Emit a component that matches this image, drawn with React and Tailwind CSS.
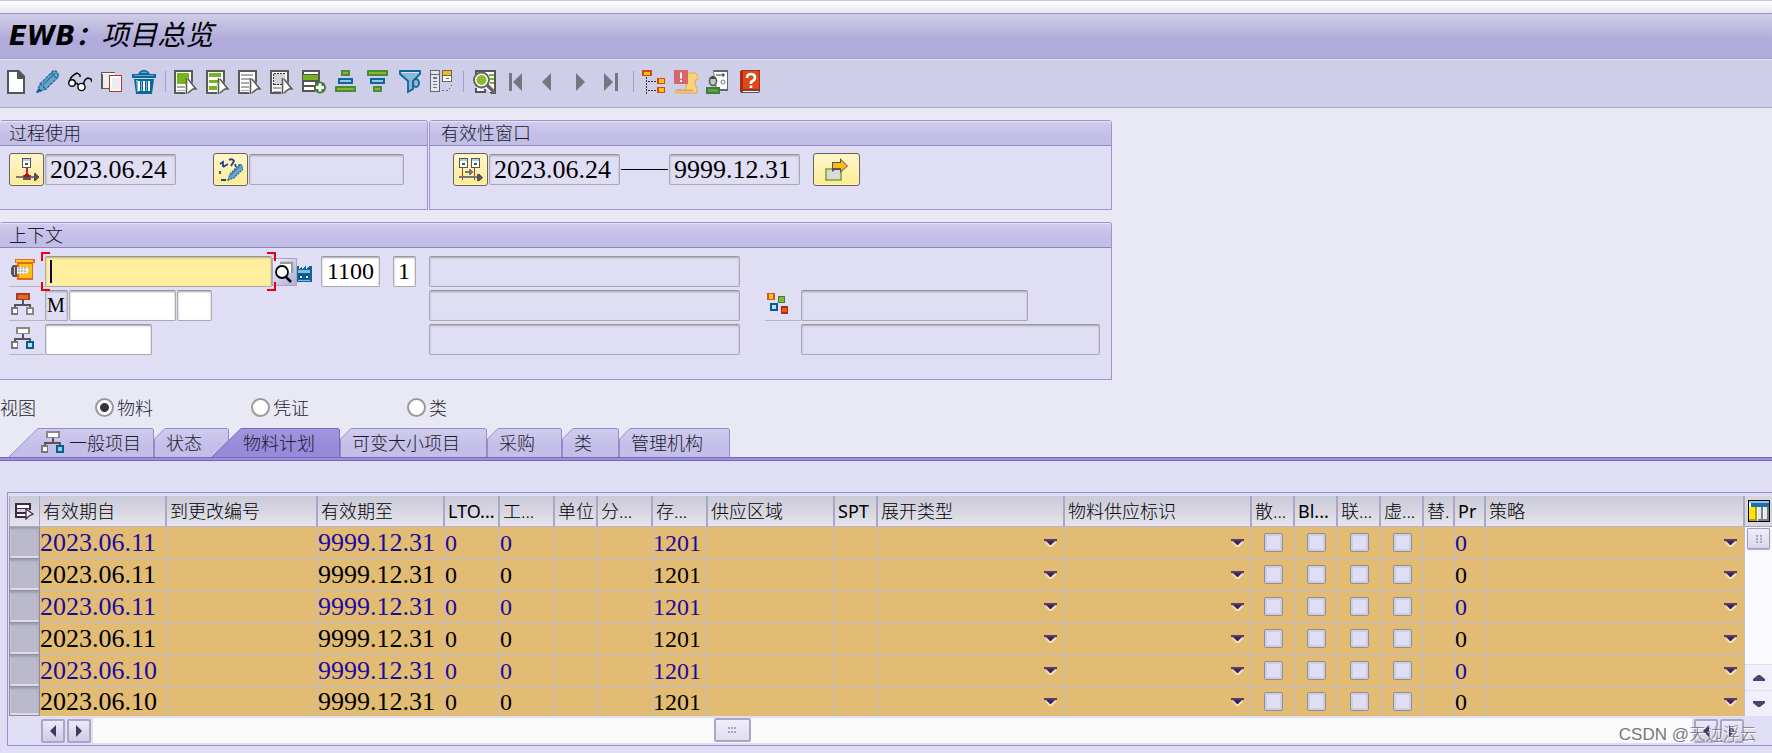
import React from "react";

const CJK = "font-['Noto_Sans','Noto_Sans_CJK_SC',sans-serif]";
const SERIF = "font-['Liberation_Serif','Noto_Sans_CJK_SC',serif]";

function Svg({ w = 24, h = 24, crisp = false, className = "", children }) {
  return (
    <svg
      width={w}
      height={h}
      viewBox={`0 0 ${w} ${h}`}
      fill="none"
      aria-hidden="true"
      shapeRendering={crisp ? "crispEdges" : undefined}
      className={`block shrink-0 ${className}`}
    >
      {children}
    </svg>
  );
}

function DocFrame({ children }) {
  return (
    <Svg>
      <g shapeRendering="crispEdges">
        <path d="M0 0h19v13H0z" fill="#5a5a5a" />
        <path d="M0 0h11v24H0z" fill="#5a5a5a" />
        <path d="M2 2h15v11h-5v9H2z" fill="#fff" />
        {children}
      </g>
      <path d="M17 11l7 9-4 1z" fill="#d9d9d9" />
      <path d="M13 8v15l4-4 5-1z" fill="#fff" />
      <path d="M12.500 8v16M14 9l8 10h-3l-5 4" stroke="#5a5a5a" strokeWidth="1.600" />
    </Svg>
  );
}

const IconNew = () => (
  <Svg>
    <path d="M3 0h12l6 6v18H3z" fill="#555" />
    <path d="M5 2h8v7h6v13H5z" fill="#fff" />
  </Svg>
);

const IconPencil = () => (
  <Svg>
    <path d="M1 23l3-9L17 1h3l3 3v3L10 19z" fill="#6ea3c8" />
    <path d="M4 14L17 1h3l2 3v3L10 19M1 22l3-8 6 5z" stroke="#156c9c" strokeWidth="1.300" strokeDasharray="3 1" />
    <path d="M7 15L19 3M15 3l5 5" stroke="#2b7dab" strokeWidth="1.500" />
    <path d="M1 23l2-5 3 3z" fill="#0b5f8e" />
  </Svg>
);

const IconGlasses = () => (
  <Svg>
    <circle cx="4" cy="13" r="3.300" fill="#fff" stroke="#000" strokeWidth="1.400" />
    <circle cx="13.500" cy="17" r="3.600" fill="#fff" stroke="#000" strokeWidth="1.400" />
    <path d="M7 14q2-2 3 1M2 10q1-4 7-7l3 2v2M16 15q-1-5 4-7l3 1 1 3" stroke="#000" strokeWidth="1.400" />
  </Svg>
);

const IconCopy = () => (
  <Svg crisp>
    <path d="M1 2h14v17H1z" fill="#5a5a5a" />
    <path d="M3 4h12v14H3z" fill="#eeeeee" />
    <path d="M2 3h13v1H2z" fill="#fff" />
    <path d="M9 5h13v17H9z" fill="#b23a22" />
    <path d="M10 6h11v15H10z" fill="#fff" />
    <path d="M12 8h8v11h-8z" fill="#ececf0" />
  </Svg>
);

const IconTrash = () => (
  <Svg>
    <path d="M2 9h20l-2 15H4z" fill="#0b6799" />
    <path d="M0 4h6q2-4 6-4t6 4h6v4H0z" fill="#0b6799" />
    <path d="M2 5h20v1H2zM8 3q4-3 8 0z" fill="#6da8cf" />
    <path d="M6 11h2v10H6zM11 11h2v10h-2zM16 11h2v10h-2z" fill="#fff" />
    <path d="M4 10h2v12H5zM9 11h1v10H9zM14 11h1v10h-1z" fill="#7db3d5" />
  </Svg>
);

const IconSelBlock = () => (
  <DocFrame>
    <path d="M3 3h12v11H3z" fill="#76b41c" />
    <path d="M3 16h8v2H3zM3 20h8v1H3z" fill="#a8a8a8" />
  </DocFrame>
);
const IconSelAll = () => (
  <DocFrame>
    <path d="M3 3h12v4H3zM3 10h9v3H3zM3 16h8v4H3z" fill="#76b41c" />
  </DocFrame>
);
const IconSelNone = () => (
  <DocFrame>
    <path d="M3 4h12v2H3zM3 8h9v2H3zM3 12h8v2H3zM3 16h8v2H3zM3 20h8v1H3z" fill="#ababab" />
  </DocFrame>
);
const IconSelDots = () => (
  <DocFrame>
    <path d="M4 4h11v11H4z" fill="#d4d4d4" />
    <path d="M4 3.500h11M3.500 4v11M4 14.500h9" stroke="#333" strokeDasharray="2 1" />
    <path d="M3 17h8v2H3zM3 21h8v1H3z" fill="#ababab" />
  </DocFrame>
);
const IconInsert = () => (
  <Svg>
    <g shapeRendering="crispEdges">
      <path d="M0 0h18v14H0zM0 14h13v8H0z" fill="#555" />
      <path d="M2 2h14v2H2zM2 12h11v3H2zM2 17h10v3H2z" fill="#fff" />
      <path d="M1 5h15v5H1z" fill="#76b41c" />
    </g>
    <circle cx="18" cy="17.500" r="6" fill="#3d7d3f" />
    <path d="M18 13.500v8M14 17.500h8" stroke="#fff" strokeWidth="3" />
  </Svg>
);
const Bar = ({ x, y, w, h = 6, c, f }) => (
  <rect x={x + 1} y={y + 1} width={w - 2} height={h - 2} fill={f} stroke={c} strokeWidth="2" />
);
const IconAsc = () => (
  <Svg>
    <Bar x={7} y={0} w={9} c="#4a8a3a" f="#84ba2a" />
    <Bar x={4} y={8} w={15} c="#0b6799" f="#9cc2de" />
    <Bar x={1} y={16} w={21} c="#4a8a3a" f="#84ba2a" />
  </Svg>
);
const IconDesc = () => (
  <Svg>
    <Bar x={1} y={0} w={21} c="#4a8a3a" f="#84ba2a" />
    <Bar x={4} y={8} w={15} c="#0b6799" f="#9cc2de" />
    <Bar x={7} y={16} w={9} c="#4a8a3a" f="#84ba2a" />
  </Svg>
);
const IconFilter = () => (
  <Svg>
    <path d="M2 1h20v3l-7 7v8l-5 3V11L2 4z" fill="#8db6d8" stroke="#0b6799" strokeWidth="1.800" />
    <path d="M3 2.500h18" stroke="#d4e4f2" />
    <ellipse cx="18" cy="13" rx="3" ry="4" stroke="#0b6799" strokeWidth="1.800" fill="#8db6d8" />
  </Svg>
);
const IconLayout = () => (
  <Svg crisp>
    <path d="M0 0h10v22H0z" fill="#666" />
    <path d="M1 1h8v3H1zM1 5h8v16H1z" fill="#e4e4f2" />
    <path d="M3 7h4v2H3zM3 11h4v1H3zM3 14h4v1H3zM3 17h4v1H3z" fill="#777" />
    <path d="M12 0h10v12H12z" fill="#666" />
    <path d="M13 1h8v4h-8z" fill="#f7b918" />
    <path d="M13 6h8v5h-8z" fill="#fff" />
    <path d="M16 8h3v1h-3z" fill="#666" />
    <path d="M12 20h2v1h-2zM16 20h2v1h-2zM19 18h1v1h-1zM21 15h1v1h-1z" fill="#666" />
  </Svg>
);
const IconFind = () => (
  <Svg>
    <path d="M3 0h21v24H3z" fill="#555" />
    <path d="M5 2h17v20H5z" fill="#fff" />
    <path d="M17 4h5v2h-5zM18 8h4v2h-4zM18 12h4v2h-4z" fill="#76b41c" />
    <path d="M0 16h7l8 3 4 5H0z" fill="#cecee8" />
    <path d="M4 18v4h9v-3" stroke="#555" strokeWidth="2" fill="#fff" />
    <circle cx="9.500" cy="10" r="7.500" fill="#fff" stroke="#666" strokeWidth="2" />
    <circle cx="9.500" cy="10" r="5" fill="#86bb30" />
    <path d="M15 15l8 8" stroke="#666" strokeWidth="3.500" />
  </Svg>
);
const IconFirst = () => (
  <Svg>
    <path d="M5 3h3v18H5zM18 3v18l-9-9z" fill="#767680" />
  </Svg>
);
const IconPrev = () => (
  <Svg>
    <path d="M15 3v18l-9-9z" fill="#767680" />
  </Svg>
);
const IconNext = () => (
  <Svg>
    <path d="M8 3v18l9-9z" fill="#767680" />
  </Svg>
);
const IconLast = () => (
  <Svg>
    <path d="M4 3v18l9-9zM15 3h3v18h-3z" fill="#767680" />
  </Svg>
);
const IconTree = () => (
  <Svg crisp>
    <path d="M0 0h10v6H0zM15 8h8v6h-8zM15 17h8v6h-8z" fill="#d2481a" />
    <path d="M2 2h6v3H2zM17 9h5v4h-5zM17 18h5v4h-5z" fill="#ffc20e" />
    <path d="M4.500 7v17" stroke="#333" strokeWidth="1" strokeDasharray="2 1" />
    <path d="M6 11.500h9M6 20.500h9" stroke="#333" strokeWidth="1" strokeDasharray="2 1" />
  </Svg>
);
const IconScroll = () => (
  <Svg>
    <path d="M12 3h10l2 3v3h-2l-1 5 2 5v4H2q-2-2 0-3h10z" fill="#f7d479" stroke="#e8a35a" />
    <path d="M3 20.500h16" stroke="#e59a68" strokeWidth="1.500" />
    <path d="M0 0h14v14H0z" fill="#d9666a" />
    <path d="M7 2.500v6M7 10v2" stroke="#fff" strokeWidth="2" />
  </Svg>
);
const IconUserDoc = () => (
  <Svg>
    <path d="M7 0h15v21H10z" fill="#666" />
    <path d="M8 2h13v17H11z" fill="#fff" />
    <path d="M10 5h5" stroke="#777" strokeWidth="1.500" />
    <path d="M15 5l2-2 2 2-2 2z" fill="#555" />
    <circle cx="17" cy="12" r="2" fill="#fff" stroke="#777" />
    <ellipse cx="7" cy="11" rx="3.500" ry="4.500" fill="#c8c8c8" stroke="#555" strokeWidth="1.500" />
    <path d="M4 9q3-5 6 0z" fill="#444" />
    <path d="M1 23v-5h12v5z" fill="#5fa13a" stroke="#3d7d3f" strokeWidth="2" />
  </Svg>
);
const IconHelp = () => (
  <Svg>
    <path d="M2 1l2-1h18v21l-2 2H3l-1-2z" fill="#b02a10" />
    <path d="M5 1h16v18H5z" fill="#da4a1b" />
    <path d="M4 20.500h17v2H5z" fill="#f2f2f2" stroke="#444" strokeWidth=".8" />
    <path d="M9 8q0-4 4-4t4 4q0 2-4 4v2M13 15.500v2.500" stroke="#fff" strokeWidth="2.600" />
  </Svg>
);

const TOOLBAR = [
  [
    ["新建", IconNew],
    ["更改", IconPencil],
    ["显示", IconGlasses],
    ["复制", IconCopy],
    ["删除", IconTrash],
  ],
  [
    ["选择块", IconSelBlock],
    ["全选", IconSelAll],
    ["取消选择", IconSelNone],
    ["选择区域", IconSelDots],
    ["插入行", IconInsert],
    ["升序", IconAsc],
    ["降序", IconDesc],
    ["过滤", IconFilter],
    ["布局", IconLayout],
  ],
  [
    ["查找", IconFind],
    ["第一页", IconFirst],
    ["上一页", IconPrev],
    ["下一页", IconNext],
    ["最后一页", IconLast],
  ],
  [
    ["层次结构", IconTree],
    ["日志", IconScroll],
    ["用户设置", IconUserDoc],
    ["帮助", IconHelp],
  ],
];

function Toolbar() {
  return (
    <div className="flex h-[49px] items-center border-y border-t-[#e4e3f4] border-b-[#a9a8c8] bg-[#cecee8] pb-1">
      {TOOLBAR.map((group, i) => (
        <React.Fragment key={i}>
          {i > 0 && (
            <span className="flex w-[10px] justify-center">
              <span className="h-[21px] w-px bg-[#a49cd8]" />
            </span>
          )}
          {group.map(([label, Icon]) => (
            <button key={label} type="button" aria-label={label} className="flex w-8 justify-center">
              <Icon />
            </button>
          ))}
        </React.Fragment>
      ))}
    </div>
  );
}

function Group({ title, titleClass = "pl-[9px]", className = "", children }) {
  return (
    <section className={`rounded-t-[3px] border border-[#9d94cf] bg-[#e0def4] ${className}`}>
      <h2
        className={`h-[25px] rounded-t-[2px] border-b border-[#8f85c6] bg-linear-to-b from-[#d2cdee] to-[#c2bee6] to-60% text-[18px] leading-6 font-light text-[#1a1a2a] shadow-[inset_0_1px_0_#e6e3f7] ${titleClass}`}
      >
        {title}
      </h2>
      {children}
    </section>
  );
}

function Field({ label, value, readOnly = false, className = "", size = "text-[24px]", pad = "px-[3px]" }) {
  const tone = readOnly ? "bg-[#e0def4]" : "bg-white";
  return (
    <input
      type="text"
      aria-label={label}
      defaultValue={value}
      readOnly={readOnly}
      className={`h-[31px] shrink-0 rounded-[2px] border border-[#a9a9ae] border-t-[#96969c] leading-7 text-black shadow-[inset_0_1px_2px_#a8a8b8] outline-none ${SERIF} ${size} ${pad} ${tone} ${className}`}
    />
  );
}

function YellowButton({ label, className = "w-[35px]", children }) {
  return (
    <button
      type="button"
      aria-label={label}
      className={`flex h-[33px] shrink-0 items-center justify-center rounded-[3px] border border-[#66645a] bg-linear-to-b from-[#fff6cc] to-[#fdea94] shadow-[inset_0_0_0_1px_#fff3b8] ${className}`}
    >
      {children}
    </button>
  );
}

const IconKeyDate = () => (
  <Svg crisp>
    <path d="M7 0h9v10H7z" fill="#555" />
    <path d="M8 2h7v7H8z" fill="#fff" />
    <path d="M8 1h7v2H8z" fill="#a9d3ea" />
    <path d="M10 5h3v2h-3z" fill="#555" />
    <path d="M11 10h2v9h-2z" fill="#c4281c" />
    <path d="M1 18h20v2H1z" fill="#777" />
    <path d="M19 15h1l4 4-4 4h-1z" fill="#555" />
    <path d="M8 17h8v5H8z" fill="#5a5a5a" />
    <path d="M10 16h4l1 3H9z" fill="#d40000" />
  </Svg>
);
const IconNumberEdit = () => (
  <Svg>
    <path
      d="M1 6l3-2v5M10 2q3-2 5 1l-3 5M4 9l5-3M1 13v3M2 22h5M16 6l1 3"
      stroke="#2a3f90"
      strokeWidth="1.800"
    />
    <path d="M9 22l2-6 10-10 4 4-10 10z" fill="#6ea3c8" stroke="#156c9c" strokeWidth="1.300" strokeDasharray="2 1" />
    <path d="M12 17l9-9" stroke="#2b7dab" />
  </Svg>
);
const IconRange = () => (
  <Svg crisp>
    <path d="M0 0h9v10H0zM12 0h9v10h-9z" fill="#555" />
    <path d="M1 1h7v8H1zM13 1h7v8h-7z" fill="#fff" />
    <path d="M1 1h7v2H1zM13 1h7v2h-7z" fill="#a9d3ea" />
    <path d="M3 5h3v2H3zM15 5h3v2h-3z" fill="#555" />
    <path d="M3 10h1v12H3zM15 10h1v12h-1z" fill="#b2382a" />
    <path d="M6 13h5v2H6zM10 11h1l3 3-3 3h-1zM0 18h21v2H0z" fill="#777" />
    <path d="M18 16h2l4 3-4 4h-2z" fill="#555" />
  </Svg>
);
const IconGoto = () => (
  <Svg>
    <path d="M1 11h15v11H1z" fill="#d9d9d9" stroke="#76a82a" strokeWidth="1.500" />
    <path d="M7 4h8V0l8 8-8 7v-3h-5l-3 2z" fill="#555" />
    <path d="M8 5h8V2l6 6-6 5v-3H8z" fill="#fdb913" />
  </Svg>
);

const IconMaterial = () => (
  <Svg>
    <path d="M4 0h20v4H4z" fill="#e36a1c" />
    <path d="M5 1h17v2H5z" fill="#ffc627" />
    <path d="M6 4h16v17H6z" fill="#e06a1c" />
    <path d="M8 5h13v14H8z" fill="#fdbf16" />
    <path d="M0 9l2-3h4v12H2l-2-3z" fill="#555" />
    <path d="M3 8h1v8H3z" fill="#ccc" />
    <path d="M6 8h10l2 3-2 4H6z" fill="#f0f0f0" />
    <path d="M8 8v7M11 8v7M14 8v7" stroke="#888" strokeDasharray="2 1" />
  </Svg>
);
function IconHierarchy({ top = "#888", topFill = "#fff", right = "#888", rightFill = "#fff" }) {
  return (
    <Svg crisp>
      <path d="M5 0h14v7H5z" fill={top} />
      <path d="M7 2h10v4H7z" fill={topFill} />
      <path d="M11 7h2v4h-2zM3 11h17v2H3zM3 12h2v2H3zM18 12h2v2h-2z" fill="#555" />
      <path d="M0 14h7v8H0z" fill="#777" />
      <path d="M2 16h4v4H2z" fill="#fff" />
      <path d="M15 14h8v8h-8z" fill={right} />
      <path d="M17 16h4v4h-4z" fill={rightFill} />
    </Svg>
  );
}
const IconClasses = () => (
  <Svg crisp>
    <path d="M0 0h8v7H0z" fill="#d85518" />
    <path d="M2 1h4v5H2z" fill="#ffc91f" />
    <path d="M11 3h7v7h-7z" fill="#3d7d3f" />
    <path d="M12 4h5v5h-5z" fill="#84ba2a" />
    <path d="M3 10h8v8H3z" fill="#055f90" />
    <path d="M5 12h4v4H5z" fill="#c4dcec" />
    <path d="M14 13h7v8h-7z" fill="#b02a10" />
    <path d="M15 15h5v4h-5z" fill="#dc5f2a" />
  </Svg>
);
const IconPlant = () => (
  <Svg w={15} h={16} crisp>
    <path d="M0 0h2v3l3-3v3l4-3v3l3-3h3v16H0z" fill="#0b6799" />
    <path d="M1 4h12v3H1z" fill="#8fb8d8" />
    <path d="M2 8h4v5H2zM8 8h4v5H8z" fill="#04507c" />
    <path d="M3 10h2v2H3zM9 10h2v2H9z" fill="#fff" />
    <path d="M1 14h12v1H1z" fill="#8fb8d8" />
  </Svg>
);
const IconMatchcode = () => (
  <Svg w={24} h={26}>
    <path d="M7 4h12v10" stroke="#9a9a9e" strokeWidth="2.500" />
    <path d="M8 5h10v9H8z" fill="#fff" />
    <circle cx="9" cy="13" r="6" fill="#fff" stroke="#000" strokeWidth="1.800" />
    <path d="M13 18l5 5" stroke="#000" strokeWidth="2.500" />
  </Svg>
);

function IconCell({ className = "w-9", children }) {
  return (
    <span className={`flex h-[31px] shrink-0 items-center border-b border-[#b5b5ba] pl-[2px] ${className}`}>{children}</span>
  );
}

const Corner = ({ className }) => <span className={`absolute size-[9px] border-[#e60012] ${className}`} />;

function TopGroups() {
  return (
    <div className="flex gap-px">
      <Group title="过程使用" className="h-[90px] w-[428px] border-l-0">
        <div className="flex items-center pt-[7px] pl-[9px]">
          <YellowButton label="关键日期">
            <IconKeyDate />
          </YellowButton>
          <Field label="有效期自" value="2023.06.24" readOnly size="text-[26px]" pad="px-1" className="ml-px w-[131px]" />
          <span className="w-[37px]" />
          <YellowButton label="更改编号">
            <IconNumberEdit />
          </YellowButton>
          <Field label="更改编号" readOnly className="ml-px w-[155px]" />
        </div>
      </Group>
      <Group title="有效性窗口" titleClass="pl-[11px]" className="h-[90px] w-[683px]">
        <div className="flex items-center pt-[7px] pl-[23px]">
          <YellowButton label="有效期间">
            <IconRange />
          </YellowButton>
          <Field label="开始日期" value="2023.06.24" readOnly size="text-[26px]" pad="px-1" className="ml-px w-[131px]" />
          <span className="mx-px h-px w-[47px] bg-black" />
          <Field label="结束日期" value="9999.12.31" readOnly size="text-[26px]" pad="px-1" className="w-[131px]" />
          <YellowButton label="应用" className="ml-[13px] w-[47px]">
            <IconGoto />
          </YellowButton>
        </div>
      </Group>
    </div>
  );
}

function Context() {
  return (
    <Group title="上下文" className="mt-3 h-[158px] w-[1112px] border-l-0">
      <div className="flex flex-col gap-[3px] pt-2 pl-[9px]">
        <div className="flex items-center">
          <IconCell>
            <IconMaterial />
          </IconCell>
          <span className="relative">
            <input
              type="text"
              aria-label="物料"
              className={`block h-[31px] w-[227px] rounded-[2px] border border-[#a9a9ae] border-t-[#96969c] bg-[#ffee9e] px-1 text-[24px] shadow-[inset_0_1px_2px_#b8b08a] outline-none ${SERIF}`}
            />
            <span className="absolute top-1 left-[5px] h-[23px] w-[2px] bg-[#0a0a50]" />
            <Corner className="-top-[4px] -left-[4px] border-t-2 border-l-2" />
            <Corner className="-bottom-[4px] -left-[4px] border-b-2 border-l-2" />
            <Corner className="-top-[4px] -right-[4px] z-10 border-t-2 border-r-2" />
            <Corner className="-right-[4px] -bottom-[4px] z-10 border-r-2 border-b-2" />
          </span>
          <button
            type="button"
            aria-label="搜索帮助"
            className="flex h-7 w-[25px] items-center border border-[#a9a6bf] bg-linear-to-br from-[#f4f2fb] to-[#b3abd6]"
          >
            <IconMatchcode />
          </button>
          <span className="flex h-[31px] items-center pt-1">
            <IconPlant />
          </span>
          <Field label="工厂" value="1100" pad="px-[5px]" className="ml-[9px] w-[59px]" />
          <Field label="用途" value="1" pad="px-1" className="ml-[13px] w-[23px]" />
          <Field label="物料描述" readOnly className="ml-[13px] w-[311px]" />
        </div>
        <div className="flex items-center">
          <IconCell>
            <IconHierarchy top="#b23a16" topFill="#dc6a2c" />
          </IconCell>
          <Field label="类别" value="M" readOnly size="text-[20px]" pad="px-px" className="w-[23px]" />
          <Field label="项目" className="ml-px w-[107px]" />
          <Field label="项目后缀" className="ml-px w-[35px]" />
          <Field label="项目描述" readOnly className="ml-[217px] w-[311px]" />
          <IconCell className="ml-[25px] w-9">
            <IconClasses />
          </IconCell>
          <Field label="类名称" readOnly className="w-[227px]" />
        </div>
        <div className="flex items-center">
          <IconCell>
            <IconHierarchy right="#055f90" rightFill="#c4dcec" />
          </IconCell>
          <Field label="节点" className="w-[107px]" />
          <Field label="节点描述" readOnly className="ml-[277px] w-[311px]" />
          <Field label="类描述" readOnly className="ml-[61px] w-[299px]" />
        </div>
      </div>
    </Group>
  );
}

function ViewChoice() {
  return (
    <div
      role="radiogroup"
      aria-labelledby="view-label"
      className="flex h-12 items-center pt-[7px] text-[18px] leading-6 font-light text-[#1a1a2a]"
    >
      <span id="view-label" className="w-[95px]">
        视图
      </span>
      {["物料", "凭证", "类"].map((t, i) => (
        <label key={t} className="flex w-[156px] items-center gap-[3px]">
          <input
            type="radio"
            name="view"
            defaultChecked={i === 0}
            className="size-[19px] appearance-none rounded-full border-2 border-[#9a9a9a] bg-white checked:bg-[radial-gradient(circle,#3a3040_0_4px,#fff_5px)]"
          />
          {t}
        </label>
      ))}
    </div>
  );
}

const TABS = [
  { label: "一般项目", w: 145, slant: true, icon: true, cls: "w-[145px] pl-8" },
  { label: "状态", w: 75, cls: "w-[75px] pl-3" },
  { label: "物料计划", w: 128, slant: true, active: true, cls: "w-[128px] pl-[31px] -ml-[17px]" },
  { label: "可变大小项目", w: 147, cls: "w-[147px] pl-3" },
  { label: "采购", w: 75, cls: "w-[75px] pl-3" },
  { label: "类", w: 57, cls: "w-[57px] pl-3" },
  { label: "管理机构", w: 111, cls: "w-[111px] pl-3" },
];

function Tabs() {
  return (
    <div role="tablist" className="flex h-[29px] pl-[9px]">
      {TABS.map((t, i) => {
        const w = t.w;
        const d = t.slant ? `M0 29L29 .5H${w - 2}l1.500 1V29` : `M.5 29V11L11 .5H${w - 2}l1.500 1V29`;
        return (
          <button
            key={t.label}
            type="button"
            role="tab"
            aria-selected={!!t.active}
            className={`relative flex h-[29px] shrink-0 items-center gap-1 text-left text-[18px] leading-6 font-light whitespace-nowrap text-[#1a1a2a] ${t.cls}`}
          >
            <svg width={w} height="29" className="absolute inset-0" aria-hidden="true">
              <defs>
                <linearGradient id={`tab${i}`} x1="0" y1="0" x2="0" y2="1">
                  <stop offset="0" stopColor={t.active ? "#a396dd" : "#d0ccee"} />
                  <stop offset=".6" stopColor={t.active ? "#988adb" : "#c4bfe8"} />
                </linearGradient>
              </defs>
              <path d={d} fill={`url(#tab${i})`} stroke={t.active ? "#7a6cba" : "#958bc9"} />
            </svg>
            {t.icon && (
              <span className="relative">
                <IconHierarchy right="#055f90" rightFill="#9cc6e4" />
              </span>
            )}
            <span className="relative">{t.label}</span>
          </button>
        );
      })}
    </div>
  );
}

const COLS = [
  ["有效期自", "w-[127px]"],
  ["到更改编号", "w-[151px]"],
  ["有效期至", "w-[127px]"],
  ["LTO...", "w-[55px]"],
  ["工...", "w-[55px]"],
  ["单位", "w-[43px]"],
  ["分...", "w-[55px]"],
  ["存...", "w-[55px]"],
  ["供应区域", "w-[127px]"],
  ["SPT", "w-[43px]"],
  ["展开类型", "w-[187px]"],
  ["物料供应标识", "w-[187px]"],
  ["散...", "w-[43px]"],
  ["Bl...", "w-[43px]"],
  ["联...", "w-[43px]"],
  ["虚...", "w-[43px]"],
  ["替.", "w-[31px]"],
  ["Pr", "w-[31px]"],
  ["策略", ""],
];

const ROWS = ["2023.06.11", "2023.06.11", "2023.06.11", "2023.06.11", "2023.06.10", "2023.06.10"];

function Drop({ label }) {
  return (
    <span className="relative block">
      <select aria-label={label} className="block h-7 w-full appearance-none bg-transparent outline-none">
        <option></option>
      </select>
      <svg width="15" height="10" className="pointer-events-none absolute top-[9px] right-[6px]" aria-hidden="true">
        <path d="M2 4l4 5h3l5-5z" fill="#f3e2c0" />
        <path d="M1 1h13v2H1z" fill="#5b3d63" />
        <path d="M3 3h9l-4 4H7z" fill="#38206b" />
      </svg>
    </span>
  );
}

function Tick({ label }) {
  return (
    <input
      type="checkbox"
      aria-label={label}
      className="mx-auto block size-[19px] appearance-none rounded-[2px] border border-[#8f8f98] bg-[#e0def4] shadow-[inset_0_0_0_2px_#cfcde2]"
    />
  );
}

function Cell({ name, from }) {
  if (["展开类型", "物料供应标识", "策略"].includes(name)) return <Drop label={name} />;
  if (["散...", "Bl...", "联...", "虚..."].includes(name)) return <Tick label={name} />;
  if (name === "有效期自") return <span className="text-[26px]">{from}</span>;
  if (name === "有效期至") return <span className="text-[26px]">9999.12.31</span>;
  if (name === "存...") return "1201";
  if (["LTO...", "工...", "Pr"].includes(name)) return "0";
  return null;
}

function Grid() {
  return (
    <table className="w-full table-fixed border-separate border-spacing-0">
      <thead>
        <tr className="h-[31px]">
          <th className="w-[31px] border-x border-b border-[#a9a7bc] bg-linear-to-b from-[#cbcad8] to-[#e4e3ee] p-0">
            <button type="button" aria-label="选择全部行" className="flex w-full justify-center">
              <Svg w={19} h={18}>
                <path d="M0 1h16v4H0z" fill="#3d2b45" />
                <path d="M0 1h2v15H0zM0 6h15v1H0zM0 10h11v2H0zM0 14h11v2H0z" fill="#3d2b45" />
                <path d="M2 3h12v3H2zM2 12h9v2H2z" fill="#fff" />
                <path d="M14 4h2v4h-2z" fill="#3d2b45" />
                <path d="M11 7v10l3-3 4-2z" fill="#fff" stroke="#3d2b45" strokeWidth="1.300" />
              </Svg>
            </button>
          </th>
          {COLS.map(([name, w]) => (
            <th
              key={name}
              scope="col"
              className={`overflow-hidden border-r-2 border-b border-r-[#aba7c2] border-b-[#b9b6cc] bg-linear-to-b from-[#cbcad8] via-[#d6d5e0] to-[#e6e5f0] p-0 pl-[3px] text-left text-[18px] leading-[30px] whitespace-nowrap text-black ${/^[A-Z]/.test(name) ? "font-normal" : "font-light"} ${w}`}
            >
              {name}
            </th>
          ))}
        </tr>
      </thead>
      <tbody>
        {ROWS.map((from, r) => {
          const last = r === ROWS.length - 1;
          return (
            <tr key={r} className={`${last ? "h-[29px]" : "h-8"} ${r % 2 ? "text-black" : "text-[#1c0aa0]"}`}>
              <td className="border-x border-b border-[#8d8c9c] bg-[#bab9cb] p-0 shadow-[inset_0_2px_2px_#a09fb2,inset_0_-2px_0_#dcdbe6,inset_1px_0_0_#dcdbe6]" />
              {COLS.map(([name]) => (
                <td
                  key={name}
                  className={`border-r border-[#c3bcd0] bg-[#e2bc72] p-0 text-[24px] leading-7 whitespace-nowrap ${SERIF} ${last ? "" : "border-b"}`}
                >
                  <Cell name={name} from={from} />
                </td>
              ))}
            </tr>
          );
        })}
      </tbody>
    </table>
  );
}

function ScrollButton({ label, d }) {
  return (
    <button
      type="button"
      aria-label={label}
      className="flex size-6 shrink-0 items-center justify-center rounded-[2px] border-2 border-[#aaa6c4] bg-linear-to-b from-[#eceaf8] to-[#cfcce6]"
    >
      <svg width="12" height="12" aria-hidden="true">
        <path d={d} fill="#3f3a5e" />
      </svg>
    </button>
  );
}
const LEFT = "M9 0v12L3 6z";
const RIGHT = "M3 0v12l6-6z";

function Dots({ cols = [1, 4, 7], rows = [1, 5] }) {
  return (
    <svg width="10" height="9" aria-hidden="true" shapeRendering="crispEdges">
      {cols.map((x) => rows.map((y) => <rect key={`${x}-${y}`} x={x} y={y} width="2" height="2" fill="#a9a5c4" />))}
    </svg>
  );
}

function VerticalScroll() {
  return (
    <div className="flex w-[27px] shrink-0 flex-col">
      <button type="button" aria-label="配置" className="flex h-[31px] items-center justify-center border-b border-[#a9a7bc] bg-[#d6d5e0]">
        <Svg w={22} h={22} crisp>
          <path d="M0 0h22v22H0z" fill="#000" />
          <path d="M1 1h20v20H1z" fill="#fff" />
          <path d="M1 1h20v2H1z" fill="#8cc6ee" />
          <path d="M3 3h18v4H3z" fill="#1d6fa8" />
          <path d="M1 7h6v13H1z" fill="#ffe600" />
          <path d="M7 7h2v14H7zM1 19h8v2H1z" fill="#b59a10" />
          <path d="M10 7h3v12h-3zM16 7h3v12h-3z" fill="#dfe9f2" />
          <path d="M13 7h2v14h-2zM19 7h2v14h-2zM10 19h11v2H10z" fill="#7d7d80" />
        </Svg>
      </button>
      <div className="flex flex-1 flex-col bg-[#fafafc] pt-px">
        <div className="mx-[2px] flex h-[21px] items-center justify-center rounded-[1px] border border-[#9e9abc] bg-linear-to-b from-[#f0eefa] to-[#d9d6ec] shadow-[0_1px_1px_#b0adc4]">
          <Dots cols={[2, 6]} rows={[1, 4, 7]} />
        </div>
      </div>
      <button type="button" aria-label="向上滚动" className="flex h-[26px] items-center justify-center border-t border-[#e0def4] bg-[#f1f0fa]">
        <svg width="14" height="8" aria-hidden="true">
          <path d="M1 7V5l5-4h2l5 4v2z" fill="#4a4570" />
        </svg>
      </button>
      <button type="button" aria-label="向下滚动" className="flex h-[26px] items-center justify-center border-t border-[#e0def4] bg-[#f1f0fa]">
        <svg width="14" height="8" aria-hidden="true">
          <path d="M1 1v2l5 4h2l5-4V1z" fill="#4a4570" />
        </svg>
      </button>
    </div>
  );
}

function HorizontalScroll() {
  return (
    <div className="flex items-center gap-[2px] py-[2px] pr-7 pl-8">
      <ScrollButton label="向左滚动" d={LEFT} />
      <ScrollButton label="向右滚动" d={RIGHT} />
      <div className="grid h-[25px] flex-1 grid-cols-[31fr_37px_47fr] bg-[#fafafb]">
        <div className="col-start-2 flex h-6 items-center justify-center rounded-[2px] border-2 border-[#aaa6c4] bg-linear-to-b from-[#f0eefa] to-[#e0def0]">
          <Dots />
        </div>
      </div>
      <ScrollButton label="向左滚动一列" d={LEFT} />
      <ScrollButton label="向右滚动一列" d={RIGHT} />
    </div>
  );
}

export default function App() {
  return (
    <div className={`relative flex min-h-screen flex-col overflow-hidden bg-[#e9e9f6] ${CJK}`}>
      <div className="h-[14px] border-t border-b border-t-[#c9c6da] border-b-[#9694b4] bg-linear-to-b from-white to-[#e6e5f2]" />
      <header className="flex h-[45px] items-center border-b border-[#a3a0c4] bg-linear-to-b from-[#cfcde6] to-[#b0abda] to-60% pb-[2px] pl-[9px]">
        <h1 className="text-[28px] leading-9 text-black italic">
          <b className="font-['DejaVu_Sans','Noto_Sans_CJK_SC',sans-serif] text-[26px] font-bold">EWB：</b>
          <span className="font-normal">项目总览</span>
        </h1>
      </header>
      <Toolbar />
      <main className="flex flex-1 flex-col pt-3">
        <TopGroups />
        <Context />
        <ViewChoice />
        <Tabs />
        <div className="flex-1 border-t border-[#7567b6] bg-[#e0def4]">
          <div className="h-[3px] border-b border-[#7567b6] bg-[#9c8fdc]" />
          <div className="mt-[31px] ml-[7px] border-y border-l border-[#9a90cc] pt-[3px] pl-px">
            <div className="flex">
              <div className="min-w-0 flex-1">
                <Grid />
              </div>
              <VerticalScroll />
            </div>
            <HorizontalScroll />
          </div>
        </div>
      </main>
      <div className="pointer-events-none absolute right-[15px] bottom-[6px] font-['Liberation_Sans','Noto_Sans_CJK_SC',sans-serif] text-[17px] leading-6 font-light text-[#77767e] [text-shadow:1px_1px_0_#fff]">
        CSDN @天边浮云
      </div>
    </div>
  );
}
